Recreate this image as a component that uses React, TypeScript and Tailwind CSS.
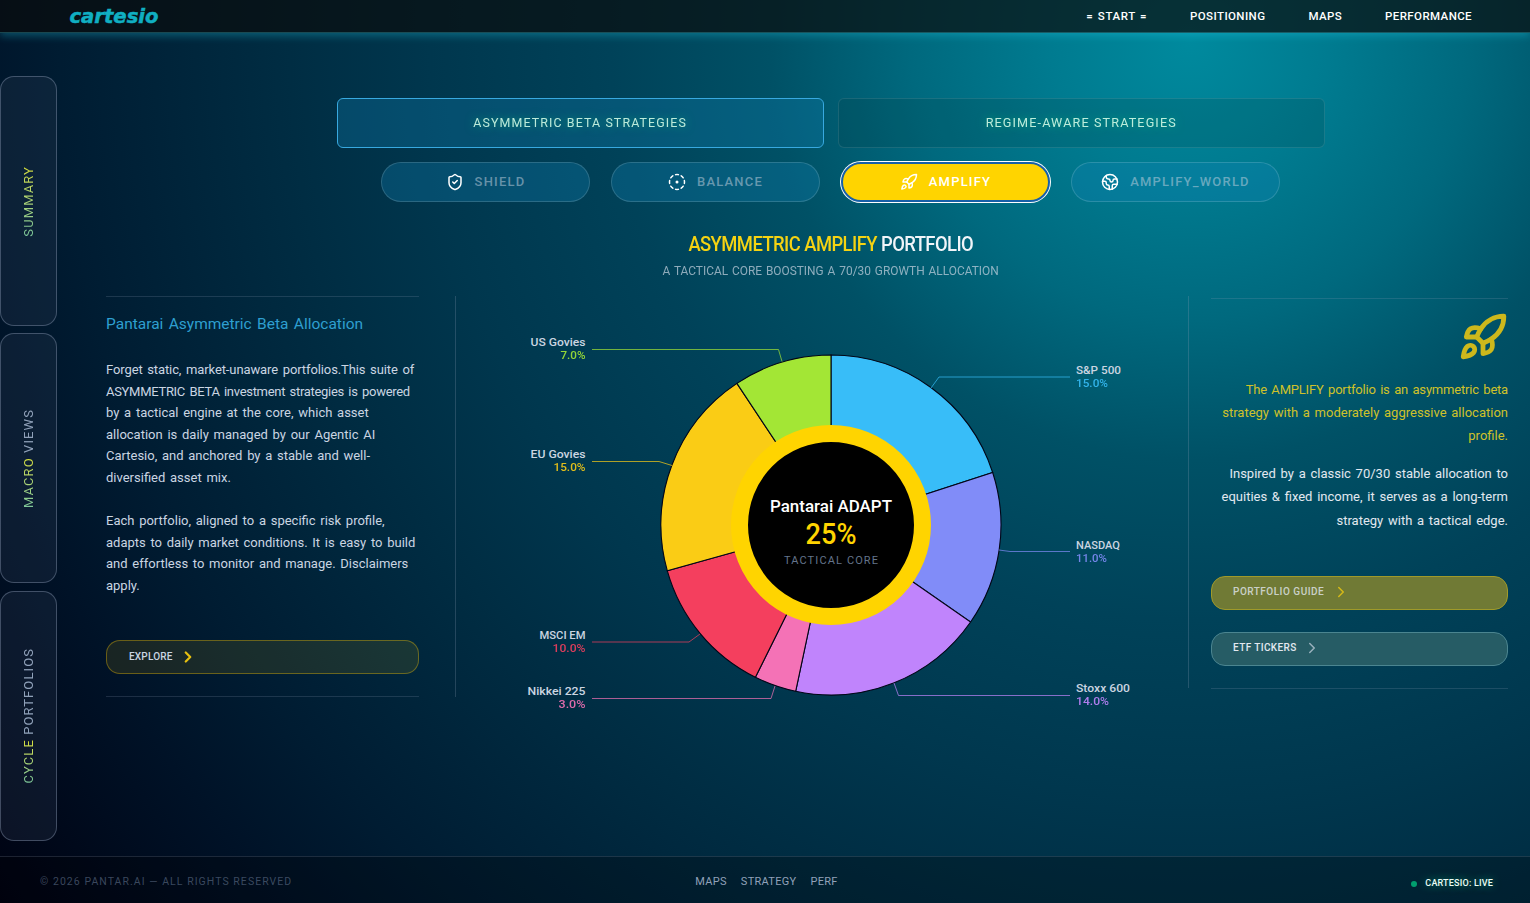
import React, { useState } from 'react';
import { ChevronRight, CircleDotDashed, Earth, Rocket, ShieldCheck } from 'lucide-react';
import type { LucideIcon } from 'lucide-react';

const NAV = ['= START =', 'POSITIONING', 'MAPS', 'PERFORMANCE'];

const PILLS: { id: string; icon: LucideIcon }[] = [
  { id: 'SHIELD', icon: ShieldCheck },
  { id: 'BALANCE', icon: CircleDotDashed },
  { id: 'AMPLIFY', icon: Rocket },
  { id: 'AMPLIFY_WORLD', icon: Earth },
];

const SIDE_TABS = [
  { accent: 'SUMMARY', rest: '' },
  { accent: 'MACRO', rest: ' VIEWS' },
  { accent: 'CYCLE', rest: ' PORTFOLIOS' },
];

// nameW / valueW keep the labels at a fixed width beside the leader lines
const SLICES = [
  { name: 'S&P 500', value: 15, color: '#38bdf8', line: '931,388 939,377 1070,377', x: 1076, y: 374, nameW: 45, valueW: 32 },
  { name: 'NASDAQ', value: 11, color: '#818cf8', line: '999,550 1010,551.5 1070,551.5', x: 1076, y: 549, nameW: 44, valueW: 31 },
  { name: 'Stoxx 600', value: 14, color: '#c084fc', line: '894,683 898.5,695.5 1070,695.5', x: 1076, y: 692, nameW: 54, valueW: 33 },
  { name: 'Nikkei 225', value: 3, color: '#f472b6', line: '775,686 771,698.5 592,698.5', x: 585.5, y: 695, nameW: 58, valueW: 27 },
  { name: 'MSCI EM', value: 10, color: '#f43f5e', line: '700,634 689,642 592,642', x: 585.5, y: 639, nameW: 46, valueW: 33 },
  { name: 'EU Govies', value: 15, color: '#facc15', line: '672,465.5 659,461.5 592,461.5', x: 585.5, y: 458, nameW: 55, valueW: 32 },
  { name: 'US Govies', value: 7, color: '#a3e635', line: '782,361.5 778.5,349.5 592,349.5', x: 585.5, y: 346, nameW: 55, valueW: 25 },
];

const CX = 831;
const CY = 525;
const R = 170;
const TOTAL = SLICES.reduce((sum, s) => sum + s.value, 0);

const point = (share: number) => {
  const a = share * Math.PI * 2;
  return `${(CX + R * Math.sin(a)).toFixed(2)},${(CY - R * Math.cos(a)).toFixed(2)}`;
};

const AllocationChart: React.FC = () => {
  let acc = 0;
  return (
    <svg viewBox="456 296 732 430" className="w-[732px] h-[430px] shrink-0">
      {SLICES.map((s) => {
        const from = acc / TOTAL;
        acc += s.value;
        return (
          <path
            key={s.name}
            d={`M${CX},${CY} L${point(from)} A${R},${R} 0 0 1 ${point(acc / TOTAL)} Z`}
            fill={s.color}
            stroke="#020617"
            strokeWidth="1.1"
          />
        );
      })}
      <circle cx={CX} cy={CY} r="91.5" fill="#000" stroke="#ffd400" strokeWidth="17" />

      {SLICES.map((s) => {
        const anchor = s.x < CX ? 'end' : 'start';
        return (
          <g key={s.name}>
            <polyline points={s.line} fill="none" stroke={s.color} strokeWidth="1" opacity="0.7" />
            <text x={s.x} y={s.y} textAnchor={anchor} textLength={s.nameW} lengthAdjust="spacingAndGlyphs" fontSize="11.5" fontWeight="500" fill="#cbd5e1">
              {s.name}
            </text>
            <text x={s.x} y={s.y + 13.3} textAnchor={anchor} textLength={s.valueW} lengthAdjust="spacingAndGlyphs" fontSize="11.5" fontWeight="500" fill={s.color} opacity="0.9">
              {s.value.toFixed(1)}%
            </text>
          </g>
        );
      })}

      <text x={CX} y="512" textAnchor="middle" textLength="122" lengthAdjust="spacingAndGlyphs" fontSize="17" fontWeight="500" fill="#fff">Pantarai ADAPT</text>
      <text x={CX} y="543.5" textAnchor="middle" textLength="51" lengthAdjust="spacingAndGlyphs" fontSize="29" fontWeight="500" fill="#ffd400">25%</text>
      <text x={CX} y="564" textAnchor="middle" textLength="94" fontSize="11" fill="#64748b">TACTICAL CORE</text>
    </svg>
  );
};

export default function App() {
  const [active, setActive] = useState('AMPLIFY');

  return (
    <div className="w-full h-[903px] flex flex-col overflow-hidden text-slate-300 font-[Roboto,sans-serif] bg-[radial-gradient(circle_at_1190px_40px,#008a9e_0px,#007b90_140px,#00697e_280px,#005166_420px,#004259_580px,#00374e_760px,#002d43_900px,#001c32_1130px,#001227_1250px,#00000f_1500px)]">
      {/* Top bar */}
      <header className="relative h-[33px] shrink-0 flex items-center justify-between pl-[69px] pr-[58px] bg-[#080c0c]/70 border-b border-cyan-300/25 shadow-[0_3px_8px_rgba(34,211,238,0.3)]">
        <svg viewBox="0 0 92 24" className="w-[92px] h-6 overflow-visible">
          <text x="0.5" y="18.5" textLength="89" lengthAdjust="spacingAndGlyphs" fontFamily="DejaVu Sans" fontSize="19" fontWeight="700" fontStyle="italic" fill="#10afc2" stroke="#10afc2" strokeWidth="0.5">cartesio</text>
        </svg>
        <nav className="pt-px flex gap-[43px] text-[11.5px] font-medium text-white">
          {NAV.map((item) => (
            <a key={item} href="#" className="whitespace-pre tracking-[0.4px] first:tracking-[0.6px] first:[word-spacing:1px]">{item}</a>
          ))}
        </nav>
      </header>

      <div className="flex-1 flex min-h-0">
        {/* Side tabs */}
        <aside className="w-[57px] shrink-0 pt-[43px] flex flex-col gap-[7.4px]">
          {SIDE_TABS.map((t) => (
            <button key={t.accent} className="h-[250px] w-full rounded-[14px] border border-slate-400/40 bg-slate-700/25 flex items-center justify-center">
              <span className="[writing-mode:vertical-rl] rotate-180 whitespace-pre text-[13px] tracking-[1.1px] text-slate-400">
                <span className="bg-linear-to-b from-[#7cc79a] to-[#d6dd35] bg-clip-text text-transparent">{t.accent}</span>
                {t.rest}
              </span>
            </button>
          ))}
        </aside>

        <main className="flex-1 min-w-0 pt-[65px] flex flex-col">
          <div className="pl-[74px] flex flex-col items-center">
            {/* Strategy families */}
            <div className="flex gap-[14px] text-[13.5px] tracking-[1.2px] text-emerald-100/90">
              <button className="w-[487px] h-[50px] pb-[2px] rounded-md border border-[#38a9e0] bg-[#1286b8]/30">
                <span className="inline-block scale-x-[0.92] [text-shadow:0_0_10px_rgba(16,185,129,0.8)]">ASYMMETRIC BETA STRATEGIES</span>
              </button>
              <button className="w-[487px] h-[50px] pb-[2px] rounded-md border border-white/10 bg-teal-950/15">
                <span className="inline-block scale-x-[0.935] [text-shadow:0_0_10px_rgba(16,185,129,0.8)]">REGIME-AWARE STRATEGIES</span>
              </button>
            </div>

            {/* Portfolios */}
            <div className="mt-[14px] flex gap-[21px]">
              {PILLS.map(({ id, icon: Icon }) => (
                <button
                  key={id}
                  onClick={() => setActive(id)}
                  className={`w-[209px] h-10 rounded-full flex items-center justify-center gap-[11px] text-[13px] font-medium tracking-[1.2px] ${
                    active === id
                      ? 'bg-[#ffd400] text-white border-2 border-[#1760a8] ring-1 ring-white'
                      : 'bg-[#1286b8]/30 text-slate-300/50 border border-white/15'
                  }`}
                >
                  <Icon size={18} className="text-white" />
                  <span>{id}</span>
                </button>
              ))}
            </div>

            <h1 className="mt-[29px] text-[20px] leading-[26px] font-medium tracking-[-0.6px] text-slate-100 scale-x-[0.92]">
              <span className="text-[#f5d312]">ASYMMETRIC AMPLIFY</span> PORTFOLIO
            </h1>
            <p className="mt-1 text-[12.5px] leading-5 [word-spacing:1px] text-slate-300/70 scale-x-[0.952]">A TACTICAL CORE BOOSTING A 70/30 GROWTH ALLOCATION</p>
          </div>

          <div className="mt-[15px] pl-[49px] flex items-start">
            {/* Strategy description */}
            <section className="w-[313px] h-[401px] border-y border-slate-400/20 text-[13px] leading-[21.6px] [word-spacing:1.5px] text-slate-300">
              <h2 className="mt-[17px] text-[15.5px] leading-5 text-[#2e9fd0]">Pantarai Asymmetric Beta Allocation</h2>
              <p className="mt-[25px] whitespace-nowrap">
                <span className="tracking-[-0.1px]">Forget static, market-unaware portfolios.This suite of</span><br />
                <span className="tracking-[-0.3px]">ASYMMETRIC BETA investment strategies is powered</span><br />
                by a tactical engine at the core, which asset<br />
                allocation is daily managed by our Agentic AI<br />
                Cartesio, and anchored by a stable and well-<br />
                diversified asset mix.
              </p>
              <p className="mt-[21.6px] whitespace-nowrap">
                Each portfolio, aligned to a specific risk profile,<br />
                adapts to daily market conditions. It is easy to build<br />
                and effortless to monitor and manage. Disclaimers<br />
                apply.
              </p>
              <button className="mt-[43px] w-full h-[34px] rounded-[14px] border border-yellow-400/35 bg-yellow-400/10 pl-[22px] flex items-center gap-[6px] text-[10px] font-medium tracking-[0.2px]">
                EXPLORE
                <ChevronRight size={18} strokeWidth={3} className="text-[#e5bf10]" />
              </button>
            </section>

            <div className="ml-9 w-px h-[401px] bg-slate-400/25" />
            <AllocationChart />
            <div className="w-px h-[392px] bg-slate-400/25" />

            {/* Active portfolio */}
            <section className="mt-[2px] ml-[22px] w-[297px] h-[391px] border-y border-slate-400/20 text-right text-[13px] leading-[23px] [word-spacing:1.5px]">
              <div className="mt-[13px] flex justify-end">
                <Rocket size={50} strokeWidth={2.3} className="text-[#cdb81c]" />
              </div>
              <p className="mt-[16px] whitespace-nowrap text-[#cfc12a]">
                <span className="tracking-[-0.2px]">The AMPLIFY portfolio is an asymmetric beta</span><br />
                strategy with a moderately aggressive allocation<br />
                profile.
              </p>
              <p className="mt-[15px] leading-[23.4px] whitespace-nowrap text-slate-200">
                Inspired by a classic 70/30 stable allocation to<br />
                equities &amp; fixed income, it serves as a long-term<br />
                strategy with a tactical edge.
              </p>
              <div className="mt-[43.5px] flex flex-col gap-[22px] text-[10px] font-medium tracking-[0.5px]">
                <button className="h-[34px] rounded-[14px] border border-[#a09a2a] bg-[#707a35] pb-[2px] pl-[21px] flex items-center gap-2 text-slate-200/80">
                  PORTFOLIO GUIDE
                  <ChevronRight size={18} className="text-[#d5b918]" />
                </button>
                <button className="h-[34px] rounded-[14px] border border-[#4b8590] bg-[#265c65] pb-[2px] pl-[21px] flex items-center gap-[6px] text-slate-200">
                  <span className="tracking-[0.4px]">ETF TICKERS</span>
                  <ChevronRight size={18} className="text-slate-300/70" />
                </button>
              </div>
            </section>
          </div>
        </main>
      </div>

      <footer className="h-[47px] shrink-0 border-t border-slate-400/20 bg-black/25 pl-10 pr-[37px] grid grid-cols-3 items-center">
        <span className="pt-[3px] text-[10.5px] tracking-[1.05px] text-slate-500/60">© 2026 PANTAR.AI — ALL RIGHTS RESERVED</span>
        <nav className="pt-[4px] flex gap-[14px] justify-center text-[11px] tracking-[0.3px] text-slate-400">
          <a href="#">MAPS</a>
          <a href="#">STRATEGY</a>
          <a href="#">PERF</a>
        </nav>
        <div className="pt-[7px] flex items-center justify-end gap-2 text-[9px] font-medium tracking-[0.2px] text-emerald-50">
          <span className="size-1.5 rounded-full bg-emerald-500/80" />
          <span className="[text-shadow:0_0_8px_rgba(16,185,129,0.8)]">CARTESIO: LIVE</span>
        </div>
      </footer>
    </div>
  );
}
